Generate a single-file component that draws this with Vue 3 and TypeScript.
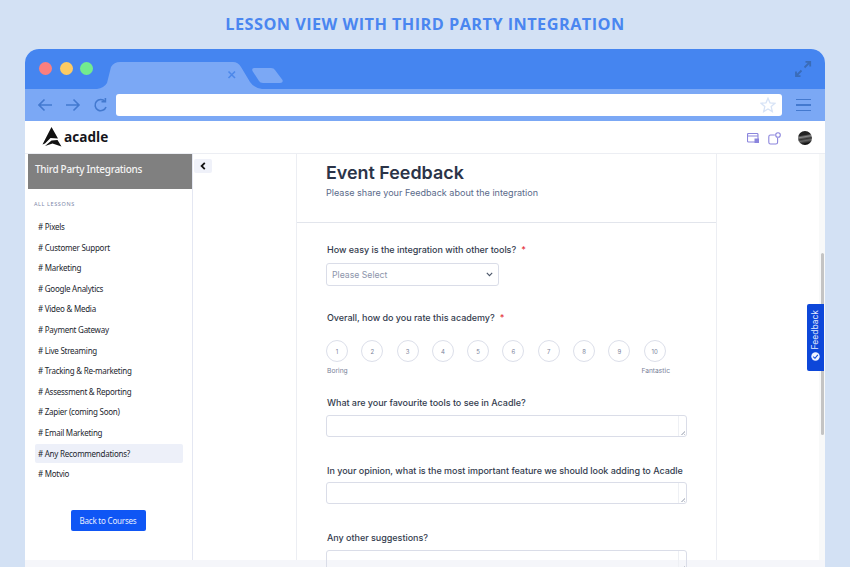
<template>
  <div class="page">
    <h1 class="title">LESSON VIEW WITH THIRD PARTY INTEGRATION</h1>

    <div class="window">
      <div class="tabbar">
        <div class="dots">
          <span class="dot red"></span>
          <span class="dot yellow"></span>
          <span class="dot green"></span>
        </div>
        <svg class="tabs" width="190" height="40" viewBox="0 0 190 40">
          <path d="M0 40 Q7 39 10 34 L14 18 Q17 13 23 13 L136 13 Q141 13 144 18 L153 33 Q157 39 165 40 Z" fill="#7ba8f5" />
          <path d="M131.5 22.5 L138 29 M138 22.5 L131.5 29" stroke="#4c88ea" stroke-width="1.6" fill="none" />
          <path d="M157 19 L174 19 Q177 19 178 21 L185.5 31 Q186.5 34 183 34 L166 34 Q163 34 162 32 L155.5 22 Q154.5 19 157 19 Z" fill="#7ba8f5" />
        </svg>
        <svg class="expand" width="18" height="18" viewBox="0 0 18 18" fill="none" stroke="#3a6cb8" stroke-width="1.8">
          <path d="M10.5 7.5 L16 2 M11.5 1.8 H16.2 V6.5" />
          <path d="M7.5 10.5 L2 16 M2 11.5 V16.2 H6.5" />
        </svg>
      </div>

      <div class="toolbar">
        <svg class="nav" width="70" height="16" viewBox="0 0 70 16" fill="none" stroke="#4379cf" stroke-width="1.6">
          <path d="M1 8 H14 M6.5 2.5 L1 8 L6.5 13.5" />
          <path d="M28 8 H41 M35.5 2.5 L41 8 L35.5 13.5" />
          <path d="M67 4.5 A5.6 5.6 0 1 0 68 10" />
          <path d="M63.5 4.8 H67.4 V1" />
        </svg>
        <div class="address">
          <svg width="16" height="16" viewBox="0 0 16 16" fill="none" stroke="#d7e3f6" stroke-width="1.3">
            <path d="M8 1.2 L10 5.8 L15 6.3 L11.2 9.6 L12.3 14.6 L8 12 L3.7 14.6 L4.8 9.6 L1 6.3 L6 5.8 Z" />
          </svg>
        </div>
        <div class="burger"><i></i><i></i><i></i></div>
      </div>

      <header class="appbar">
        <div class="logo">
          <svg width="20" height="20" viewBox="0 0 20 20" fill="#111">
            <path d="M9.5 0 L16 11.5 L8.5 11 L3 16.5 L0.5 17.5 Z" />
            <path d="M3 19 L9.5 13.5 L15.5 13 L19.5 19.5 L10.5 16.5 Z" />
          </svg>
          <span>acadle</span>
        </div>
        <div class="appbar-icons">
          <svg width="12" height="10" viewBox="0 0 12 10" fill="none" stroke="#8b85dd" stroke-width="1.1">
            <rect x="0.5" y="0.5" width="10.5" height="8.5" rx="1" />
            <path d="M0.5 3 H11" />
            <rect x="7.5" y="5.5" width="4.5" height="4.5" fill="#8b85dd" stroke="none" />
          </svg>
          <svg width="13" height="13" viewBox="0 0 13 13" fill="none" stroke="#8b85dd" stroke-width="1.1">
            <path d="M6.8 3 H2.5 Q0.8 3 0.8 4.7 V10.2 Q0.8 12 2.5 12 H7.8 Q9.6 12 9.6 10.2 V6" />
            <circle cx="10" cy="3" r="2.3" />
          </svg>
          <span class="avatar"></span>
        </div>
      </header>

      <div class="body">
        <aside class="sidebar">
          <div class="course">Third Party Integrations</div>
          <div class="all">ALL LESSONS</div>
          <ul class="lessons">
            <li v-for="lesson in lessons" :key="lesson" :class="{ active: lesson === activeLesson }"># {{ lesson }}</li>
          </ul>
          <div class="back-wrap">
            <button class="back">Back to Courses</button>
          </div>
        </aside>

        <div class="gutter">
          <button class="collapse">
            <svg width="6" height="8" viewBox="0 0 6 8" fill="none" stroke="#111" stroke-width="1.8">
              <path d="M4.8 0.8 L1.6 4 L4.8 7.2" />
            </svg>
          </button>
        </div>

        <main class="form">
          <div class="form-head">
            <h2>Event Feedback</h2>
            <p>Please share your Feedback about the integration</p>
          </div>
          <div class="fields">
            <label class="q first">How easy is the integration with other tools?<em>*</em></label>
            <div class="select">
              <span>Please Select</span>
              <svg width="7" height="5" viewBox="0 0 7 5" fill="none" stroke="#4a5568" stroke-width="1.1">
                <path d="M0.8 0.8 L3.5 3.6 L6.2 0.8" />
              </svg>
            </div>

            <label class="q rate-q">Overall, how do you rate this academy?<em>*</em></label>
            <div class="scale">
              <span v-for="n in 10" :key="n" class="circle">{{ n }}</span>
            </div>
            <div class="scale-labels">
              <span>Boring</span>
              <span>Fantastic</span>
            </div>

            <label class="q tools-q">What are your favourite tools to see in Acadle?</label>
            <div class="textarea"><span class="grip"></span></div>

            <label class="q next-q">In your opinion, what is the most important feature we should look adding to Acadle</label>
            <div class="textarea"><span class="grip"></span></div>

            <label class="q next-q">Any other suggestions?</label>
            <div class="textarea"><span class="grip"></span></div>
          </div>
        </main>

        <div class="rest"></div>

        <div class="scrollbar"></div>
        <div class="feedback">
          <span class="fb-text">Feedback</span>
          <svg class="fb-icon" width="9" height="9" viewBox="0 0 9 9">
            <circle cx="4.5" cy="4.5" r="4.2" fill="#f1f4ff" />
            <path d="M2.2 4.6 L4 6.3 L6.8 2.8" fill="none" stroke="#0d47d9" stroke-width="1.1" />
          </svg>
        </div>
      </div>
      <div class="foot"></div>
    </div>
  </div>
</template>

<script setup lang="ts">
const lessons: string[] = [
  'Pixels',
  'Customer Support',
  'Marketing',
  'Google Analytics',
  'Video & Media',
  'Payment Gateway',
  'Live Streaming',
  'Tracking & Re-marketing',
  'Assessment & Reporting',
  'Zapier (coming Soon)',
  'Email Marketing',
  'Any Recommendations?',
  'Motvio',
]

const activeLesson = 'Any Recommendations?'
</script>

<style>
html,
body {
  margin: 0;
  overflow: hidden;
}
</style>

<style scoped>
.page {
  width: 850px;
  height: 567px;
  overflow: hidden;
  background: #d3e1f4;
  font-family: Inter, "Liberation Sans", sans-serif;
  box-sizing: border-box;
  padding: 0 25px;
}

.title {
  margin: 0;
  height: 49px;
  line-height: 48px;
  text-align: center;
  font-family: "Open Sans", sans-serif;
  font-size: 16.3px;
  font-weight: 700;
  letter-spacing: 0.45px;
  color: #4a86f0;
}

.window {
  height: 518px;
  background: #fff;
  border-radius: 14px 14px 0 0;
  overflow: hidden;
  display: flex;
  flex-direction: column;
}

.tabbar {
  height: 40px;
  flex: none;
  background: #4585f0;
  display: flex;
  align-items: flex-start;
}

.dots {
  display: flex;
  gap: 7.5px;
  padding: 13px 0 0 14px;
}

.dot {
  width: 13px;
  height: 13px;
  border-radius: 50%;
}

.red { background: #fb7f7f; }
.yellow { background: #fdcb64; }
.green { background: #72ec8e; }

.tabs {
  margin-left: 4px;
  flex: none;
}

.expand {
  margin: 11px 13px 0 auto;
}

.toolbar {
  height: 32px;
  flex: none;
  background: #7ba8f5;
  display: flex;
  align-items: center;
  box-sizing: border-box;
  padding: 0 14px 0 13px;
}

.nav {
  flex: none;
}

.address {
  margin-left: 8px;
  width: 666px;
  height: 22px;
  background: #fff;
  border-radius: 3px;
  display: flex;
  align-items: center;
  justify-content: flex-end;
  padding-right: 6px;
  box-sizing: border-box;
}

.burger {
  margin-left: auto;
  width: 15px;
  display: flex;
  flex-direction: column;
  gap: 4px;
}

.burger i {
  height: 1.4px;
  background: #4379cf;
}

.appbar {
  height: 32px;
  flex: none;
  display: flex;
  align-items: center;
  justify-content: space-between;
  padding: 0 13px 0 17px;
  border-bottom: 1px solid #eceef3;
}

.logo {
  display: flex;
  align-items: center;
  gap: 2px;
}

.logo span {
  font-family: "Open Sans", sans-serif;
  font-weight: 700;
  font-size: 13.6px;
  color: #15151a;
  margin-top: -1px;
}

.appbar-icons {
  display: flex;
  align-items: center;
  gap: 9px;
  margin-top: 2px;
}

.avatar {
  width: 14px;
  height: 14px;
  margin-left: 8px;
  border-radius: 50%;
  background: linear-gradient(170deg, #222 0 30%, #888 42%, #333 55%, #666 66%, #111 85%);
}

.body {
  flex: 1;
  display: flex;
  min-height: 0;
  position: relative;
}

.sidebar {
  width: 168px;
  flex: none;
  box-sizing: border-box;
  padding-left: 3px;
  border-right: 1px solid #e4e7f2;
  font-family: "Noto Sans", sans-serif;
}

.course {
  height: 35px;
  background: #808080;
  color: #f4f4f4;
  font-size: 10px;
  font-weight: 500;
  letter-spacing: -0.3px;
  line-height: 30px;
  padding-left: 7px;
}

.all {
  margin: 11px 0 0 6px;
  font-size: 5.5px;
  letter-spacing: 0.6px;
  color: #7d88a8;
  line-height: 8px;
}

.lessons {
  list-style: none;
  margin: 9px 0 0;
  padding: 0 9px 0 7px;
  color: #23262e;
  font-size: 8px;
  letter-spacing: -0.25px;
}

.lessons li {
  height: 19.6px;
  line-height: 19.6px;
  margin-bottom: 1px;
  padding-left: 3px;
  border-radius: 2px;
}

.lessons li.active {
  background: #edf0f9;
}

.back-wrap {
  display: flex;
  justify-content: center;
  margin-top: 26px;
  padding-right: 4px;
}

.back {
  width: 75px;
  height: 21px;
  padding: 0;
  border: none;
  border-radius: 2px;
  background: #0f56f5;
  color: #e8eeff;
  font-family: "Noto Sans", sans-serif;
  font-size: 8px;
  letter-spacing: -0.2px;
}

.gutter {
  width: 104px;
  flex: none;
  box-sizing: border-box;
  padding: 5px 0 0 1px;
  border-right: 1px solid #eceef3;
}

.collapse {
  display: flex;
  align-items: center;
  justify-content: center;
  width: 18px;
  height: 14px;
  padding: 0;
  border: none;
  border-radius: 2px;
  background: #eff1f9;
}

.form {
  width: 419px;
  flex: none;
  border-right: 1px solid #eceef3;
}

.form-head {
  height: 69px;
  box-sizing: border-box;
  padding: 7px 0 0 29px;
  border-bottom: 1px solid #e2e5ec;
}

.form-head h2 {
  margin: 0;
  font-size: 17.9px;
  font-weight: 600;
  line-height: 24px;
  color: #2b3448;
}

.form-head p {
  margin: 2px 0 0;
  font-size: 9.05px;
  line-height: 12px;
  color: #5a6a8a;
}

.fields {
  padding-left: 29px;
}

.q {
  display: block;
  padding-left: 1px;
  font-size: 9px;
  font-weight: 500;
  letter-spacing: -0.03px;
  line-height: 12px;
  color: #343c4e;
}

.q em {
  font-style: normal;
  color: #e5343d;
  margin-left: 5px;
}

.q.first { margin-top: 21px; }
.q.rate-q { margin-top: 26px; }
.q.tools-q { margin-top: 21.5px; }
.q.next-q { margin-top: 28px; }

.select {
  margin-top: 7px;
  width: 173px;
  height: 23px;
  box-sizing: border-box;
  display: flex;
  align-items: center;
  justify-content: space-between;
  padding: 0 5px;
  border: 1px solid #dadde8;
  border-radius: 3px;
  font-size: 8.7px;
  color: #8d95ab;
}

.scale {
  display: flex;
  gap: 13.3px;
  margin-top: 16px;
}

.circle {
  width: 22px;
  height: 22px;
  box-sizing: border-box;
  flex: none;
  display: flex;
  align-items: center;
  justify-content: center;
  border: 1px solid #dcdfea;
  border-radius: 50%;
  font-size: 6px;
  color: #7b839a;
}

.scale-labels {
  width: 343px;
  display: flex;
  justify-content: space-between;
  margin-top: 4.5px;
  padding-left: 1px;
  font-size: 6.7px;
  line-height: 9px;
  color: #7b839a;
}

.textarea {
  position: relative;
  margin-top: 5.5px;
  width: 361px;
  height: 22px;
  box-sizing: border-box;
  border: 1px solid #dadde8;
  border-radius: 3px;
  flex: none;
}

.textarea::after {
  content: "";
  position: absolute;
  top: 0;
  right: 0;
  bottom: 0;
  width: 7px;
  border-left: 1px solid #eef0f4;
}

.grip {
  position: absolute;
  right: 1px;
  bottom: 1px;
  width: 4px;
  height: 4px;
  background: linear-gradient(135deg, transparent 50%, #c6cad3 50%, #c6cad3 65%, transparent 65%, transparent 80%, #c6cad3 80%);
}

.rest {
  flex: 1;
  background: #fff;
  border-right: 6px solid #f8f9f9;
}

.scrollbar {
  position: absolute;
  right: 1px;
  top: 99px;
  width: 3px;
  height: 182px;
  background: #c4c4c4;
  border-radius: 2px;
}

.feedback {
  position: absolute;
  right: 1px;
  top: 150px;
  width: 17px;
  height: 67px;
  box-sizing: border-box;
  padding: 6px 0 5px;
  background: #0d47d9;
  border-radius: 2px 0 0 2px;
  display: flex;
  flex-direction: column;
  align-items: center;
  gap: 3px;
  color: #e7edff;
  font-size: 8.5px;
}

.fb-text {
  writing-mode: vertical-rl;
  transform: rotate(180deg);
  line-height: 17px;
}

.fb-icon {
  flex: none;
}

.foot {
  height: 7px;
  flex: none;
  background: #f5f6fa;
}
</style>
